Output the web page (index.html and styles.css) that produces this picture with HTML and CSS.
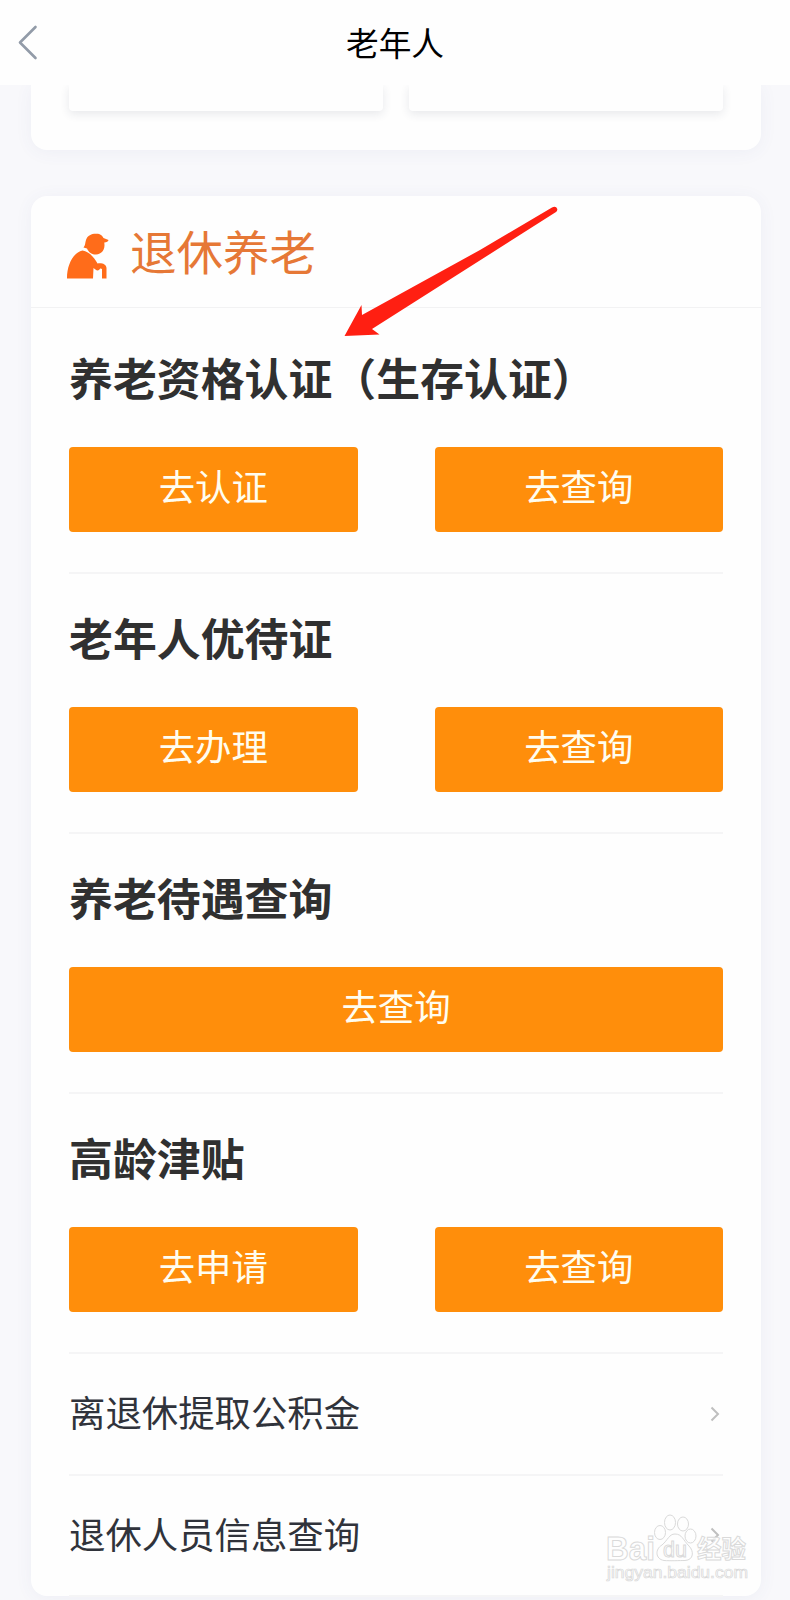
FILE: index.html
```
<!DOCTYPE html>
<html lang="zh-CN">
<head>
<meta charset="utf-8">
<title>老年人</title>
<link rel="stylesheet" href="styles.css">
</head>
<body>
<div class="screen">
  <header class="navbar">
    <svg class="back" viewBox="0 0 22 38"><path d="M18.500 3 3 18.500 18.500 34"/></svg>
    <h1 class="navbar-title">老年人</h1>
  </header>
  <main class="content">
    <section class="card card-previous">
      <div class="tile"></div>
      <div class="tile"></div>
    </section>
    <section class="card">
      <div class="card-header">
        <svg class="elder" viewBox="0 0 44 46">
          <path d="M18 14.500C20 12 19.500 10 20.500 7 22 2 27 .5 31 .8 35 .8 36.500 2.500 38 5L43 7Q42.500 9 38.800 9.500C40 17 36 21.300 30.500 21.500 26 21.700 23 19 21.500 15.500Z"/>
          <path d="M17 17.500C24 18.500 29 25 32 30.500 35 29.500 41 30.500 41 35V45.500H36.500V36C35 34.800 34.500 35.500 33.500 37 31.500 38.500 29.500 36 28 35L27.500 45.500H1.500C1.300 33 7 20 17 17.500Z"/>
        </svg>
        <h2 class="card-title">退休养老</h2>
      </div>
      <div class="service">
        <h3 class="service-title">养老资格认证（生存认证）</h3>
        <div class="actions"><a class="button">去认证</a><a class="button">去查询</a></div>
      </div>
      <div class="service">
        <h3 class="service-title">老年人优待证</h3>
        <div class="actions"><a class="button">去办理</a><a class="button">去查询</a></div>
      </div>
      <div class="service">
        <h3 class="service-title">养老待遇查询</h3>
        <div class="actions"><a class="button">去查询</a></div>
      </div>
      <div class="service">
        <h3 class="service-title">高龄津贴</h3>
        <div class="actions"><a class="button">去申请</a><a class="button">去查询</a></div>
      </div>
      <a class="row"><span class="row-label">离退休提取公积金</span><svg class="chevron" viewBox="0 0 10 16"><path d="M1.500 1.500 8 8 1.500 14.500"/></svg></a>
      <a class="row"><span class="row-label">退休人员信息查询</span><svg class="chevron" viewBox="0 0 10 16"><path d="M1.500 1.500 8 8 1.500 14.500"/></svg></a>
    </section>
  </main>
  <svg class="arrow" viewBox="0 0 250 160"><path d="M14.500 146 31.500 115 32 125 150 60 222 17.500Q226 15.500 227.300 19 227.500 21 226 22L160 64 42 139 49.500 144.500Z"/></svg>
  <svg class="watermark" viewBox="0 0 150 80">
    <text class="brand" x="4" y="49.500" textLength="49" lengthAdjust="spacingAndGlyphs">Bai</text>
    <g class="paw">
      <ellipse cx="58" cy="22.500" rx="5.500" ry="7"/>
      <ellipse cx="68" cy="12.500" rx="5.500" ry="7.500"/>
      <ellipse cx="81" cy="14" rx="5.500" ry="7"/>
      <ellipse cx="88.500" cy="26" rx="5.500" ry="7"/>
      <path d="M73 24C67 24 66 30 60 35 53 39 53 49 62 50.500 68 51 78 50.500 83 50.500 92 50 92 41 87 36 81 30 80 24 73 24Z"/>
    </g>
    <text class="du" x="61" y="47" textLength="24" lengthAdjust="spacingAndGlyphs">du</text>
    <text class="cn" x="95" y="47.500" textLength="49" lengthAdjust="spacingAndGlyphs">经验</text>
    <text class="site" x="5" y="68" textLength="141" lengthAdjust="spacingAndGlyphs">jingyan.baidu.com</text>
  </svg>
</div>
</body>
</html>
```
FILE: styles.css
```
* { box-sizing: border-box; }

body {
  margin: 0;
  background: #f8f8fb;
  font-family: "Noto Sans CJK SC", sans-serif;
  color: #30333b;
}

.screen {
  position: relative;
  width: 790px;
  height: 1600px;
  overflow: hidden;
}

.navbar {
  position: relative;
  z-index: 1;
  display: grid;
  grid-template-columns: 60px 1fr 60px;
  align-items: center;
  height: 85px;
  background: #fefefe;
}

.back {
  width: 22px;
  height: 38px;
  margin-left: 17px;
  fill: none;
  stroke: #929ba8;
  stroke-width: 2.6;
  stroke-linecap: round;
  stroke-linejoin: round;
}

.navbar-title {
  margin: 0;
  padding-bottom: 2px;
  color: #000;
  font-size: 32.7px;
  line-height: 48px;
  font-weight: 400;
  text-align: center;
}

.content {
  display: flex;
  flex-direction: column;
  gap: 46px;
  padding: 0 29px 0 31px;
}

.card {
  height: 1400px;
  border-radius: 16px;
  background: #fefefe;
  box-shadow: 0 2px 18px rgba(70, 90, 160, .06);
}

.card-previous {
  display: grid;
  grid-template-columns: 314px 314px;
  gap: 26px;
  height: 65px;
  padding: 0 38px 39px;
  border-radius: 0 0 16px 16px;
}

.tile {
  border-radius: 0 0 4px 4px;
  background: #fefefe;
  box-shadow: 0 3px 10px rgba(50, 55, 80, .11);
}

.card-header {
  display: flex;
  align-items: center;
  gap: 20px;
  height: 112px;
  padding: 0 35px 0 34px;
  border-bottom: 1px solid #f2f2f3;
}

.elder {
  width: 45px;
  height: 46px;
  margin-top: 8px;
  fill: #ff6c1a;
}

.card-title {
  margin: 0;
  padding-bottom: 4px;
  color: #e67836;
  font-size: 46.5px;
  line-height: 68px;
  font-weight: 400;
}

.service {
  height: 260px;
  margin: 0 38px;
  padding-top: 31px;
  border-bottom: 2px solid #f5f5f6;
}

.card-header + .service { height: 266px; padding-top: 37px; }

.service-title {
  margin: 0 0 38px;
  color: #303030;
  font-size: 43.9px;
  line-height: 64px;
  font-weight: 700;
  white-space: nowrap;
}

.actions {
  display: flex;
  gap: 77px;
}

.button {
  flex: 1;
  height: 84.500px;
  border-radius: 4px;
  background: #ff8e0b;
  color: #fffdf0;
  font-size: 36.4px;
  line-height: 76px;
  text-align: center;
}

.row {
  display: flex;
  align-items: center;
  justify-content: space-between;
  height: 121.500px;
  margin: 0 38px;
  border-bottom: 2px solid #f5f5f6;
  font-size: 36.4px;
}

.row-label { padding-bottom: 5px; }

.chevron {
  width: 10px;
  height: 16px;
  margin-right: 3px;
  fill: none;
  stroke: #bfbfbf;
  stroke-width: 2;
}

.arrow {
  position: absolute;
  z-index: 2;
  left: 330px;
  top: 190px;
  width: 250px;
  height: 160px;
  fill: #ff1f12;
}

.watermark {
  position: absolute;
  left: 602px;
  top: 1510px;
  width: 150px;
  height: 80px;
  overflow: visible;
  fill: #fefefe;
  fill-opacity: .8;
  stroke: #dadada;
  stroke-width: 1;
}

.watermark text {
  font-family: "Liberation Sans", "Noto Sans CJK SC", sans-serif;
}

.brand { font-size: 33px; font-weight: 700; }
.watermark .du { font-size: 22px; }
.watermark .cn { font-size: 25px; font-weight: 700; }
.watermark .site { font-size: 16.5px; stroke-width: .7; stroke: #d8d8d8; }
```
